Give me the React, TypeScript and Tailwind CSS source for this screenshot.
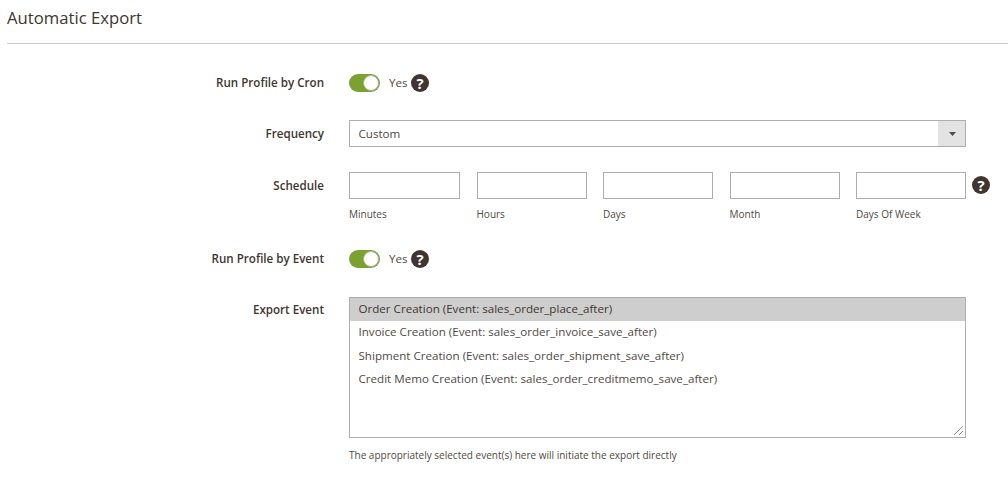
import React from "react";

const EVENTS = [
  "Order Creation (Event: sales_order_place_after)",
  "Invoice Creation (Event: sales_order_invoice_save_after)",
  "Shipment Creation (Event: sales_order_shipment_save_after)",
  "Credit Memo Creation (Event: sales_order_creditmemo_save_after)",
];

const FIELDS = ["Minutes", "Hours", "Days", "Month", "Days Of Week"];

function Help() {
  return (
    <span className="flex h-[18px] w-[18px] shrink-0 items-center justify-center rounded-full bg-[#41362f] text-[15px] font-bold leading-none text-white">
      ?
    </span>
  );
}

function Toggle() {
  return (
    <div className="flex items-center">
      <span className="flex h-[18px] w-[31px] items-center justify-end rounded-full bg-[#79a22e] p-px">
        <span className="h-4 w-4 rounded-full border border-[#adadad] bg-white" />
      </span>
      <span className="ml-[9px] w-[22px] text-[11.5px] text-[#514943]">Yes</span>
      <Help />
    </div>
  );
}

function Label({ children }: { children: React.ReactNode }) {
  return (
    <div className="w-[325px] shrink-0 pr-px text-right text-[11.6px] font-semibold text-[#41362f]">
      {children}
    </div>
  );
}

export default function App() {
  return (
    <div className="h-[481px] w-[1008px] overflow-hidden bg-white font-['Open_Sans',sans-serif] text-[#303030]">
      {/* Section title */}
      <div className="ml-[7px] h-[44px] border-b border-[#cccccc] pt-[6px] text-[16.7px] leading-[24px] text-[#41362f]">
        Automatic Export
      </div>

      {/* Cron */}
      <div className="mt-[30px] flex h-[18px] items-center">
        <Label>Run Profile by Cron</Label>
        <div className="ml-[24px]">
          <Toggle />
        </div>
      </div>

      {/* Frequency */}
      <div className="mt-[28px] flex h-[27px] items-center">
        <Label>Frequency</Label>
        <div className="ml-[24px] flex h-[27px] w-[617px] items-stretch border border-[#adadad]">
          <div className="flex-1 pl-[8.5px] text-[11.6px] leading-[25px] text-[#514943]">Custom</div>
          <div className="flex w-[27px] items-center justify-center bg-[#e3e3e3] pl-px">
            <svg width="7" height="4" viewBox="0 0 7 4">
              <path d="M0 0h7L3.5 4z" fill="#514943" />
            </svg>
          </div>
        </div>
      </div>

      {/* Schedule */}
      <div className="mt-[25px] flex items-start">
        <div className="leading-[27px]">
          <Label>Schedule</Label>
        </div>
        <div className="ml-[24px] grid w-[617px] grid-cols-[111px_110px_110px_110px_110px] gap-x-[16.5px]">
          {FIELDS.map((name) => (
            <div key={name}>
              <div className="h-[27px] border border-[#adadad] bg-white" />
              <div className="mt-[8px] text-[10px] leading-[14px] text-[#514943]">{name}</div>
            </div>
          ))}
        </div>
        <div className="ml-[6px] mt-[4px]">
          <Help />
        </div>
      </div>

      {/* Event */}
      <div className="mt-[29px] flex h-[18px] items-center">
        <Label>Run Profile by Event</Label>
        <div className="ml-[24px]">
          <Toggle />
        </div>
      </div>

      {/* Export event */}
      <div className="mt-[29px] flex items-start">
        <div className="pt-[4px]">
          <Label>Export Event</Label>
        </div>
        <div className="ml-[24px] w-[617px]">
          <div className="relative h-[141px] border border-[#adadad] text-[11.6px] leading-[22px] text-[#514943]">
            {EVENTS.map((event, i) => (
              <div key={event} className={i === 0 ? "h-[23.3px] bg-[#cecece] pl-[8.5px] text-[#41362f]" : "h-[23.3px] pl-[8.5px]"}>
                {event}
              </div>
            ))}
            <svg className="absolute bottom-px right-px" width="11" height="11" viewBox="0 0 11 11">
              <path d="M1 10 10 1M6 10l4-4" stroke="#555555" strokeWidth="1" strokeDasharray="1 0.5" />
            </svg>
          </div>
          <div className="mt-[10px] text-[10px] leading-[14px] text-[#514943]">
            The appropriately selected event(s) here will initiate the export directly
          </div>
        </div>
      </div>
    </div>
  );
}
